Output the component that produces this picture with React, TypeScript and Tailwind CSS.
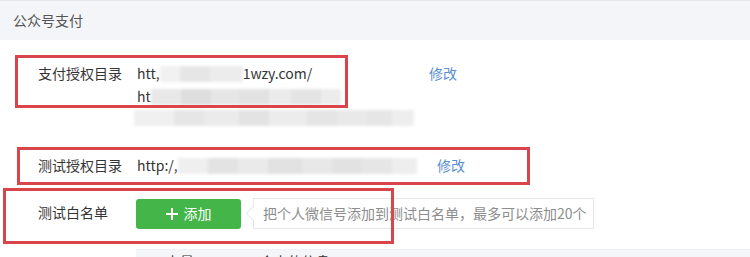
import React from "react";

const font = { fontFamily: '"Noto Sans CJK SC", "Liberation Sans", sans-serif' };

// 打码区域：一串灰色方块加模糊
function Mosaic({ blocks, className = "" }: { blocks: [number, string][]; className?: string }) {
  return (
    <span className={"inline-flex h-[16px] align-middle blur-[1.5px] " + className}>
      {blocks.map(([w, c], i) => (
        <span key={i} style={{ width: w, backgroundColor: c }} className="h-full" />
      ))}
    </span>
  );
}

export default function App() {
  return (
    <div className="relative w-[750px] h-[257px] overflow-hidden bg-white text-[14px]" style={font}>
      <div className="h-[40px] border-t border-[#e4e8eb] bg-[#f4f5f9] pl-[13px] leading-[38px] text-[#555]">
        公众号支付
      </div>

      {/* 支付授权目录 */}
      <div className="flex pt-[22px] leading-[23px] text-[#353535]">
        <div className="w-[137px] shrink-0 pl-[38px]">支付授权目录</div>
        <div className="w-[292px] shrink-0">
          <div className="flex items-center">
            <span>htt,</span>
            <Mosaic blocks={[[20, "#f1f1f1"], [30, "#e6e6e6"], [33, "#ececec"]]} />
            <span>1wzy.com/</span>
          </div>
          <div className="flex items-center">
            <span>ht</span>
            <Mosaic blocks={[[30, "#e8e8e8"], [30, "#dedede"], [28, "#e6e6e6"], [30, "#e2e2e2"], [22, "#ebebeb"], [30, "#e4e4e4"], [20, "#ececec"]]} />
          </div>
          <div className="flex items-center -ml-[3px] mt-[2px]">
            <Mosaic blocks={[[40, "#f0f0f0"], [30, "#e6e6e6"], [35, "#ebebeb"], [30, "#e3e3e3"], [38, "#ececec"], [30, "#e5e5e5"], [30, "#e9e9e9"], [25, "#e6e6e6"], [22, "#eeeeee"]]} />
          </div>
        </div>
        <div className="text-[#5b8fd0]">修改</div>
      </div>

      {/* 测试授权目录 */}
      <div className="flex mt-[28px] leading-[23px] text-[#353535]">
        <div className="w-[137px] shrink-0 pl-[38px]">测试授权目录</div>
        <div className="w-[300px] shrink-0 flex items-center">
          <span>http:/,</span>
          <Mosaic blocks={[[30, "#efefef"], [30, "#e3e3e3"], [30, "#eaeaea"], [34, "#e1e1e1"], [30, "#e8e8e8"], [30, "#e2e2e2"], [30, "#e6e6e6"], [25, "#eeeeee"]]} />
        </div>
        <div className="text-[#5b8fd0]">修改</div>
      </div>

      {/* 测试白名单 */}
      <div className="flex items-center mt-[21px] text-[#353535]">
        <div className="w-[136px] shrink-0 pl-[38px] leading-[23px] -mt-[3px]">测试白名单</div>
        <button className="flex h-[30px] w-[105px] items-center justify-center gap-[6px] rounded-[3px] bg-[#44b549] text-white">
          <svg width="12" height="12" viewBox="0 0 12 12" fill="none" stroke="white" strokeWidth="2">
            <path d="M6 0v12M0 6h12" />
          </svg>
          <span>添加</span>
        </button>
        <div className="relative ml-[12px] flex h-[31px] w-[341px] items-center border border-[#e7e7eb] bg-white pl-[9px] text-[#8d8d8d]">
          <span className="absolute -left-[6px] top-[9px] h-[11px] w-[11px] rotate-45 border-b border-l border-[#e7e7eb] bg-white" />
          <span className="relative">把个人微信号添加到测试白名单，最多可以添加20个</span>
        </div>
      </div>

      <div className="mt-[20px] ml-[136px] h-[20px] border-t border-[#eef0f3] bg-[#f4f5f9] pl-[30px] text-[#333] leading-[23px]">
        <span>上量</span>
        <span className="ml-[66px]">会上的信息</span>
      </div>

      {/* 红框标注 */}
      <div className="absolute left-[15px] top-[55px] h-[53px] w-[333px] border-[3px] border-[#d9454b]" />
      <div className="absolute left-[17px] top-[147px] h-[38px] w-[513px] border-[3px] border-[#d9454b]" />
      <div className="absolute left-[3px] top-[188px] h-[56px] w-[391px] border-[3px] border-[#d9454b]" />
    </div>
  );
}
